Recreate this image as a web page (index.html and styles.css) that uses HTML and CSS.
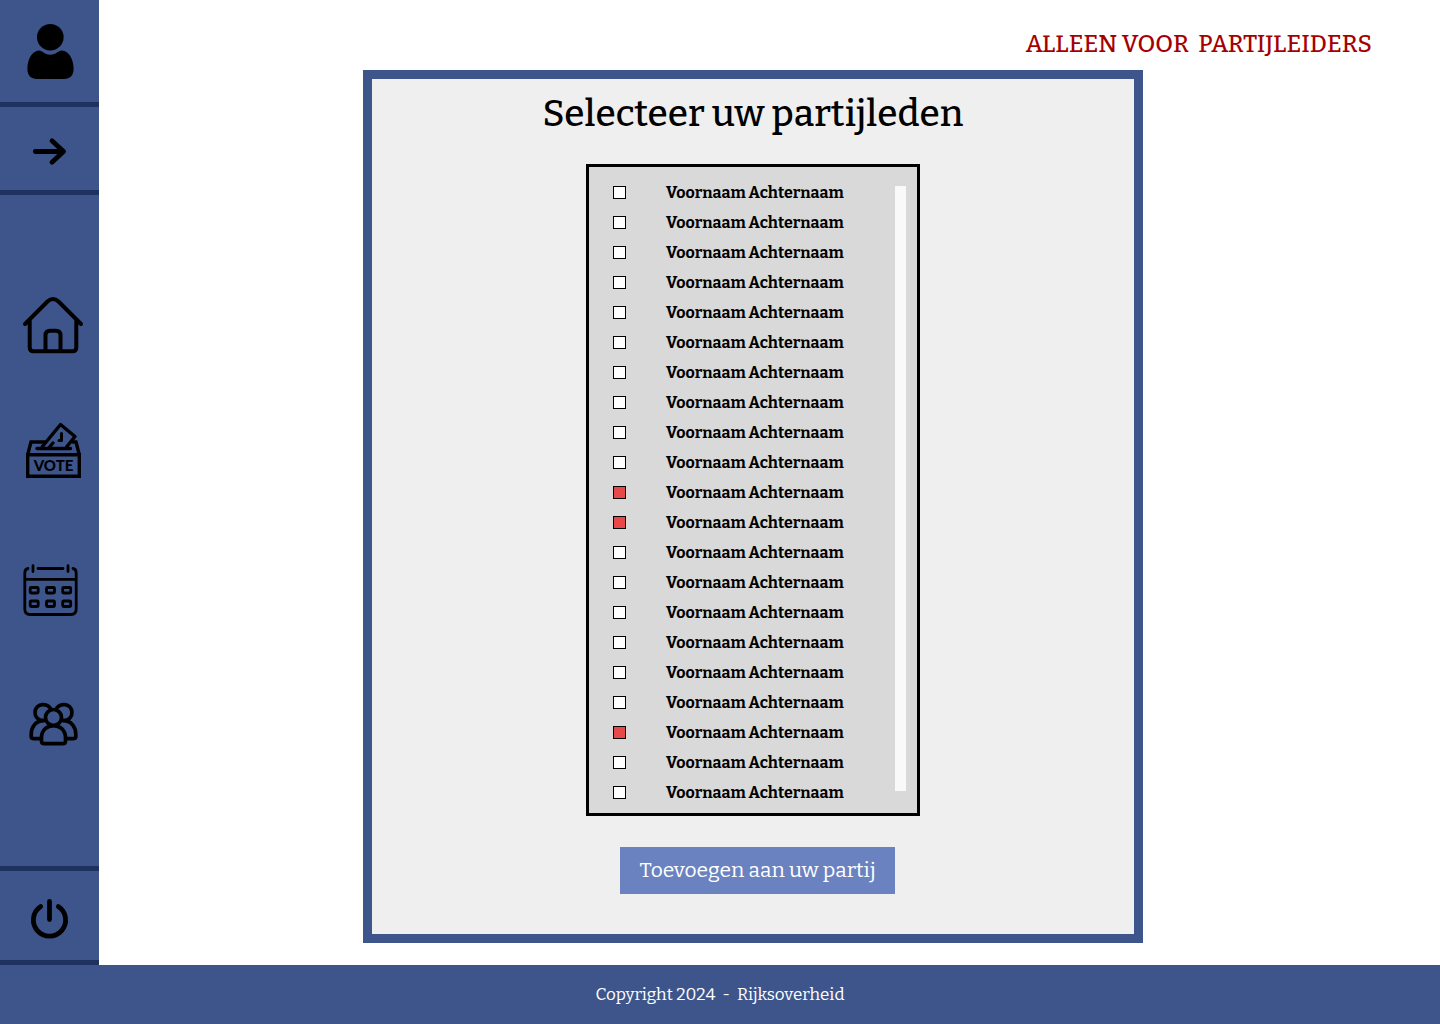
FILE: index.html
```html
<!DOCTYPE html>
<html lang="nl">
<head>
<meta charset="utf-8">
<meta name="viewport" content="width=device-width, initial-scale=1">
<title>Selecteer uw partijleden</title>
<link rel="stylesheet" href="styles.css">
</head>
<body>
<div class="layout">
  <aside class="sidebar">
    <a class="side-cell" href="#profiel" aria-label="Profiel">
      <svg class="icon" viewBox="0 0 99 102" height="102">
        <circle cx="50.3" cy="37.2" r="13.3"/>
        <path d="M39 50.5C41 50.5 42 51.500 43.500 52.500C47.500 55.500 53 55.500 57 52.500C58.500 51.500 60 50.500 62 50.500C69 51 73.600 59 73.600 69C73.600 75.500 70 79 64 79H37C31 79 27.400 75.500 27.400 69C27.400 59 32 51 39 50.500Z"/>
      </svg>
    </a>
    <a class="side-cell" href="#uitklappen" aria-label="Menu uitklappen">
      <svg class="icon line" viewBox="0 107 99 83" height="83" stroke-width="4.8">
        <path d="M35.300 151.500H63.500M52 140.800L63.500 151.500L52 162.200"/>
      </svg>
    </a>
    <nav class="menu" aria-label="Hoofdmenu">
      <a href="#home" aria-label="Home">
        <svg class="icon line" viewBox="0 290 99 70" height="70" stroke-width="4">
          <path d="M25 324L47.500 301.500Q53 296.500 58.500 301.500L81 324M29.700 320V347.500Q29.700 351.300 33.500 351.300H72.500Q76.300 351.300 76.300 347.500V320M45.500 350.500V335.500Q45.500 330.800 50 330.800H56Q60.500 330.800 60.500 335.500V350.500"/>
        </svg>
      </a>
      <a href="#stemmen" aria-label="Stemmen">
        <svg class="icon line" viewBox="0 423 99 70" height="70" stroke-width="3.4">
          <path class="sharp" d="M27.700 454.700H79.300V476.300H27.700ZM27.700 454.700L31 442H45M73 442H76L79.300 454.700"/>
          <path d="M37 448.500H70.500M42 447L60.500 424.500L75 436.500L66.500 447M53 443L49.500 447"/>
          <path stroke-width="3" d="M61.500 433.500V440.500H59"/>
          <text class="vote" x="53.500" y="471" text-anchor="middle">VOTE</text>
        </svg>
      </a>
      <a href="#agenda" aria-label="Agenda">
        <svg class="icon line" viewBox="0 556 99 70" height="70" stroke-width="2.800">
          <path d="M28 568.500Q24.800 569 24.800 573V609Q24.800 614.500 30 614.500H71Q76.200 614.500 76.200 609V573Q76.200 569 73 568.500M25 579.300H76M38 568.500H63M33 565.700V571.500M68 565.700V571.500"/>
          <g>
            <rect x="30.200" y="587.500" width="8" height="5.500" rx="1"/>
            <rect x="46.500" y="587.500" width="8" height="5.500" rx="1"/>
            <rect x="62.700" y="587.500" width="8" height="5.500" rx="1"/>
            <rect x="30.200" y="601" width="8" height="5.500" rx="1"/>
            <rect x="46.500" y="601" width="8" height="5.500" rx="1"/>
            <rect x="62.700" y="601" width="8" height="5.500" rx="1"/>
          </g>
        </svg>
      </a>
      <a href="#leden" aria-label="Leden">
        <svg class="icon line" viewBox="0 689 99 70" height="70" stroke-width="3.700">
          <circle cx="53.500" cy="717.500" r="8"/>
          <path d="M44.500 743.700Q41.500 743.700 41.500 741V738C41.500 721.500 65.500 721.500 65.500 738V741Q65.500 743.700 62.500 743.700Z"/>
          <path d="M43.500 720.500C31.500 720.500 33 703.700 43.300 704.600Q49 705 51 709.500M63.500 720.500C75.500 720.500 74 703.700 63.700 704.600Q58 705 56 709.500"/>
          <path d="M43.500 720.700C35.500 721 31.200 727 31.200 734.500V736.500Q31.200 738.700 34 738.700H41M63.500 720.700C71.500 721 75.800 727 75.800 734.500V736.500Q75.800 738.700 73 738.700H66"/>
        </svg>
      </a>
    </nav>
    <a class="side-cell side-cell-last" href="#uitloggen" aria-label="Uitloggen">
      <svg class="icon line" viewBox="0 871 99 89" height="89" stroke-width="4.800">
        <path d="M49.500 901.500V919.500M40.700 906.500A16.100 16.100 0 1 0 58.300 906.500"/>
      </svg>
    </a>
  </aside>

  <main class="content">
    <p class="notice">ALLEEN VOOR&nbsp; PARTIJLEIDERS</p>
    <form class="card">
      <h1 class="title">Selecteer uw partijleden</h1>
      <div class="members">
        <ul class="member-list">
          <li><label class="member"><input type="checkbox"><span>Voornaam Achternaam</span></label></li>
          <li><label class="member"><input type="checkbox"><span>Voornaam Achternaam</span></label></li>
          <li><label class="member"><input type="checkbox"><span>Voornaam Achternaam</span></label></li>
          <li><label class="member"><input type="checkbox"><span>Voornaam Achternaam</span></label></li>
          <li><label class="member"><input type="checkbox"><span>Voornaam Achternaam</span></label></li>
          <li><label class="member"><input type="checkbox"><span>Voornaam Achternaam</span></label></li>
          <li><label class="member"><input type="checkbox"><span>Voornaam Achternaam</span></label></li>
          <li><label class="member"><input type="checkbox"><span>Voornaam Achternaam</span></label></li>
          <li><label class="member"><input type="checkbox"><span>Voornaam Achternaam</span></label></li>
          <li><label class="member"><input type="checkbox"><span>Voornaam Achternaam</span></label></li>
          <li><label class="member"><input type="checkbox" checked><span>Voornaam Achternaam</span></label></li>
          <li><label class="member"><input type="checkbox" checked><span>Voornaam Achternaam</span></label></li>
          <li><label class="member"><input type="checkbox"><span>Voornaam Achternaam</span></label></li>
          <li><label class="member"><input type="checkbox"><span>Voornaam Achternaam</span></label></li>
          <li><label class="member"><input type="checkbox"><span>Voornaam Achternaam</span></label></li>
          <li><label class="member"><input type="checkbox"><span>Voornaam Achternaam</span></label></li>
          <li><label class="member"><input type="checkbox"><span>Voornaam Achternaam</span></label></li>
          <li><label class="member"><input type="checkbox"><span>Voornaam Achternaam</span></label></li>
          <li><label class="member"><input type="checkbox" checked><span>Voornaam Achternaam</span></label></li>
          <li><label class="member"><input type="checkbox"><span>Voornaam Achternaam</span></label></li>
          <li><label class="member"><input type="checkbox"><span>Voornaam Achternaam</span></label></li>
        </ul>
        <div class="scroll-track"></div>
      </div>
      <div class="actions">
        <button class="add-button" type="button">Toevoegen aan uw partij</button>
      </div>
    </form>
  </main>
</div>
<footer class="footer">Copyright 2024 &nbsp;-&nbsp; Rijksoverheid</footer>
</body>
</html>
```
FILE: styles.css
```css
* {
  box-sizing: border-box;
}

body {
  margin: 0;
  min-height: 100vh;
  display: flex;
  flex-direction: column;
  background: #fff;
  color: #000;
  font-family: Bitter, "DejaVu Serif", serif;
}

.layout {
  flex: 1;
  display: flex;
}

.sidebar {
  flex: 0 0 99px;
  display: flex;
  flex-direction: column;
  background: #3e558c;
}

.side-cell {
  display: block;
  border-bottom: 5px solid #1f325f;
}

.side-cell-last {
  border-top: 5px solid #1f325f;
}

.icon {
  display: block;
  width: 100%;
  overflow: visible;
}

.line {
  fill: none;
  stroke: #000;
  stroke-linecap: round;
  stroke-linejoin: round;
}

.sharp {
  stroke-linejoin: miter;
}

.vote {
  fill: #000;
  stroke: none;
  font: 900 15px Lato, sans-serif;
}

.menu {
  flex: 1;
  display: flex;
  flex-direction: column;
  gap: 63px;
  padding-top: 95px;
}

.content {
  flex: 1;
  display: flex;
  flex-direction: column;
  padding: 28px 33px 22px 0;
}

.notice {
  margin: 0;
  padding: 0 35px 10px 0;
  color: #a50000;
  font-size: 24px;
  font-weight: 500;
  line-height: 32px;
  text-align: right;
}

.card {
  width: 100%;
  max-width: 780px;
  margin: 0 auto;
  padding: 13px 0 40px;
  border: 9px solid #3e558c;
  background: #efefef;
  display: flex;
  flex-direction: column;
  align-items: center;
}

.title {
  margin: 0 0 28px;
  font-size: 37px;
  font-weight: 500;
  line-height: 44px;
}

.members {
  width: 334px;
  padding: 11px 11px 6px 24px;
  border: 3px solid #000;
  background: #d9d9d9;
  display: flex;
  justify-content: space-between;
}

.member-list {
  margin: 0;
  padding: 0;
  list-style: none;
  display: grid;
  gap: 1px;
}

.member {
  display: flex;
  align-items: center;
  gap: 40px;
  font-size: 16px;
  font-weight: 700;
  line-height: 29px;
  white-space: nowrap;
}

.member input {
  appearance: none;
  width: 13px;
  height: 13px;
  margin: 0;
  border: 1px solid #000;
  background: #fff;
}

.member input:checked {
  background: #e94848;
}

.scroll-track {
  width: 11px;
  margin: 8px 0 16px;
  background: #f9f9f9;
}

.actions {
  padding: 31px 0 0 9px;
}

.add-button {
  display: block;
  width: 275px;
  padding: 0;
  border: 0;
  background: #6a82c0;
  color: #fff;
  font-family: inherit;
  font-size: 21px;
  line-height: 47px;
}

.footer {
  background: #3e558c;
  color: #fff;
  font-size: 17px;
  line-height: 59px;
  text-align: center;
}
```
